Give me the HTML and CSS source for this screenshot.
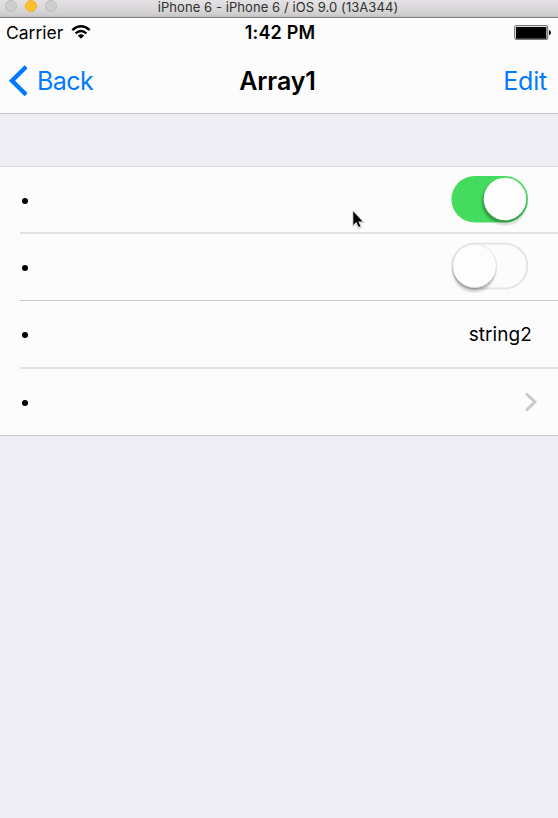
FILE: index.html
```html
<!DOCTYPE html>
<html lang="en">
<head>
<meta charset="utf-8">
<title>Array1</title>
<link rel="stylesheet" href="styles.css">
</head>
<body>
<div class="titlebar">
  <div class="lights"><i class="light"></i><i class="light light-min"></i><i class="light"></i></div>
  <span class="window-title">iPhone 6 - iPhone 6 / iOS 9.0 (13A344)</span>
</div>
<header class="top">
  <div class="status">
    <div class="side">
      <span class="carrier">Carrier</span>
      <svg class="wifi" width="20" height="15" viewBox="0 0 20 15">
        <path d="M1.300 5.100Q10-2.500 18.700 5.100M4.600 8.300Q10 3.800 15.400 8.300" fill="none" stroke="#000" stroke-width="2.400"/>
        <path d="M6.900 10.600Q10 7.900 13.100 10.600L10 13.800Z"/>
      </svg>
    </div>
    <span class="time">1:42 PM</span>
    <div class="side side-end">
      <svg class="battery" width="38" height="16" viewBox="0 0 38 16">
        <rect x=".7" y=".7" width="33" height="13.800" rx="2" fill="#fff" stroke="#777" stroke-width="1.200"/>
        <rect x="2" y="2" width="30.400" height="11.700" rx=".5"/>
        <path d="M35 5q2 .5 2 2.600T35 10.300Z"/>
      </svg>
    </div>
  </div>
  <nav class="nav">
    <a class="back">
      <svg width="20" height="32" viewBox="0 0 20 32"><path d="M19.200 1.700L5 15.700L19.200 29.700" fill="none" stroke="#007aff" stroke-width="4.400"/></svg>
      <span class="back-text">Back</span>
    </a>
    <h1 class="title">Array1</h1>
    <a class="edit">Edit</a>
  </nav>
</header>
<main class="list">
  <div class="row">
    <i class="bullet"></i>
    <svg class="switch" width="80" height="54" viewBox="0 0 80 54">
      <defs>
        <clipPath id="track"><rect x="1.500" y="4" width="76.500" height="46.500" rx="23.250"/></clipPath>
        <filter id="soft" x="-20%" y="-20%" width="140%" height="140%"><feGaussianBlur stdDeviation="1"/></filter>
      </defs>
      <circle cx="55" cy="32" r="21.500" fill="#000" opacity=".14" filter="url(#soft)"/>
      <rect x="1.500" y="4" width="76.500" height="46.500" rx="23.250" fill="#44db5e"/>
      <g clip-path="url(#track)"><circle cx="54" cy="29.500" r="22" fill="#000" opacity=".3" filter="url(#soft)"/></g>
      <circle cx="55" cy="27" r="21.300" fill="#fdfdfd"/>
    </svg>
  </div>
  <div class="row">
    <i class="bullet"></i>
    <svg class="switch" width="80" height="54" viewBox="0 0 80 54">
      <rect x="2.300" y="4.700" width="75" height="44.800" rx="22.400" fill="#fcfcfc" stroke="#e3e3e3" stroke-width="1.800"/>
      <circle cx="24" cy="32.200" r="21" fill="#000" opacity=".16" filter="url(#soft)"/>
      <circle cx="24.300" cy="28.500" r="21.500" fill="#000" opacity=".32" filter="url(#soft)"/>
      <circle cx="24.500" cy="26.800" r="21.800" fill="#fdfdfd" stroke="#dedede" stroke-width=".8"/>
    </svg>
  </div>
  <div class="row">
    <i class="bullet"></i>
    <span class="value">string2</span>
  </div>
  <div class="row">
    <i class="bullet"></i>
    <svg class="chevron" width="14" height="20" viewBox="0 0 14 20"><path d="M2 1.500L11 10L2 18.500" fill="none" stroke="#c7c7cc" stroke-width="2.800"/></svg>
  </div>
</main>
<svg class="cursor" width="14" height="20" viewBox="0 0 14 20">
  <path d="M2 1V16.500L5 13.700L7.500 19L10.700 17.500L8.500 12.500H13Z" fill="#fff" stroke="#ccc" stroke-width="1"/>
  <path d="M2.300 1.500V15L5.300 12L7.700 17L9.500 16.200L7.300 11.500H11.500Z"/>
</svg>
</body>
</html>
```

FILE: styles.css
```css
* { box-sizing: border-box; }
body {
  margin: 0;
  height: 818px;
  overflow: hidden;
  background: #efeef4;
  color: #000;
  font-family: Inter, "Liberation Sans", sans-serif;
}
svg { display: block; flex: none; }
.titlebar {
  height: 18px;
  display: grid;
  grid-template-columns: 1fr auto 1fr;
  background: linear-gradient(#e4e2e4, #d8d6d8 10px, #cecdce 15px, #bdbcbd 17px);
  border-bottom: 1px solid #808080;
}
.lights { display: flex; gap: 8px; padding-left: 5px; }
.light {
  width: 12px;
  height: 12px;
  border: 1px solid #bdbcbd;
  border-radius: 50%;
  background: #cecdce;
}
.light-min { background: #ffbf2f; border-color: #f0b02a; }
.window-title {
  font-size: 13px;
  line-height: 15px;
  height: 15px;
  letter-spacing: .07px;
  margin-left: -2px;
  color: #303030;
  white-space: nowrap;
}
.top { height: 96px; background: #fcfcfc; border-bottom: 1px solid #c8c7cc; }
.status, .nav { display: grid; grid-template-columns: 1fr auto 1fr; align-items: center; }
.status { height: 30px; padding: 0 6px; font-size: 18px; }
.side { display: flex; align-items: center; gap: 8px; }
.side-end { justify-content: flex-end; }
.carrier { font-size: 17.5px; margin-top: -2px; }
.wifi { margin-top: -1px; }
.time { font-weight: 600; letter-spacing: .15px; padding-left: 2px; margin-top: -1px; }
.nav { height: 65px; padding: 0 11px 0 7px; font-size: 25px; }
.back, .edit { color: #007aff; }
.back { display: flex; align-items: center; gap: 10px; }
.back-text { letter-spacing: -.6px; }
.title { margin: 0; padding-left: 1px; font-size: 25px; font-weight: 600; letter-spacing: -.1px; }
.edit { text-align: right; letter-spacing: -.2px; }
.list {
  margin-top: 52px;
  height: 270px;
  display: grid;
  grid-template-rows: 67px 67px 68px 66px;
  background: #fcfcfc;
  border-top: 1px solid #dedde2;
  border-bottom: 1px solid #c8c7cc;
}
.row {
  margin-left: 20px;
  padding-right: 26px;
  display: flex;
  align-items: center;
  justify-content: space-between;
  border-bottom: 2px solid #e2e2e3;
}
.row:nth-child(2) { border-bottom: 1px solid #c8c7cc; }
.row:last-child { border-bottom: 0; }
.bullet { width: 6px; height: 6px; margin: 2px 0 0 2px; border-radius: 50%; background: #000; }
.switch { margin: 0 2px 2px 0; }
.value { font-size: 19px; letter-spacing: .08px; }
.chevron { margin-right: -6px; }
.cursor { position: absolute; left: 351px; top: 210px; }
```
